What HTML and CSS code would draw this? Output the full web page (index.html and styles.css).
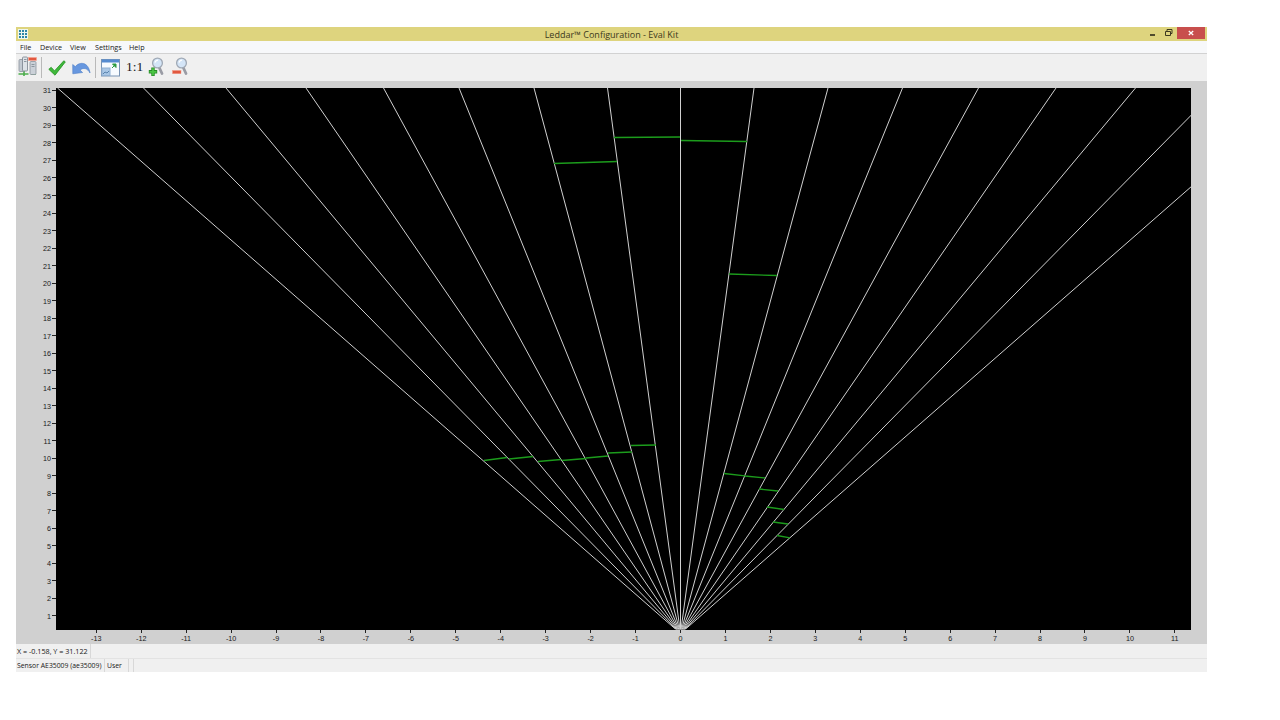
FILE: index.html
```
<!DOCTYPE HTML>
<html>
<head>
	<meta charset="utf-8">
	<title>Leddar™ Configuration - Eval Kit</title>
	<link rel="stylesheet" href="styles.css">
</head>
<body>
	<div class="window">
		<div class="titlebar">
			<svg class="appicon" width="10" height="10" viewBox="0 0 10 10">
				<rect width="10" height="10" fill="#eef6ee"/>
				<path d="M1 2h8M1 5h8M1 8h8" stroke="#2d86a8" stroke-width="2" stroke-dasharray="2 1"/>
			</svg>
			<span class="title">Leddar™ Configuration - Eval Kit</span>
			<div class="winbuttons">
				<svg width="33" height="12" viewBox="0 0 33 12">
					<path d="M4 8h5" stroke="#2c2a18" stroke-width="1.6"/>
					<path d="M19.500 4.500h5v4h-5zM21 4V2.500h5v4h-1.500" fill="none" stroke="#3c391f"/>
				</svg>
				<button class="close"><svg width="6" height="6" viewBox="0 0 6 6"><path d="M.8 1l4.400 4M5.200 1L.8 5" stroke="#fff" stroke-width="1.300"/></svg></button>
			</div>
		</div>
		<div class="menu">
			<span class="mfile">File</span>
			<span class="mdevice">Device</span>
			<span class="mview">View</span>
			<span class="msettings">Settings</span>
			<span>Help</span>
		</div>
		<div class="toolbar">
			<svg class="connect" width="20" height="21" viewBox="0 0 20 21">
				<path d="M.5 18h10M6 15v5M13 18h5" stroke="#4cad4c" stroke-width="1.600"/>
				<rect x="1" y="3.500" width="5" height="12" rx="1" fill="#c3cad2" stroke="#8a939d" stroke-width=".8"/>
				<rect x="4.500" y="1" width="5" height="14" rx="1" fill="#dde2e7" stroke="#78828d" stroke-width=".8"/>
				<path d="M6 3.500h2.500M6 5.500h2.500" stroke="#8c969f"/>
				<rect x="12" y="5.500" width="6" height="13" rx="1" fill="#cbd1d8" stroke="#8a939d" stroke-width=".8"/>
				<path d="M13.500 8.500h3M13.500 10.500h3" stroke="#8c969f"/>
				<rect x="10.500" y="1.500" width="8" height="3" fill="#e2583f" stroke="#f6a493" stroke-width=".6"/>
			</svg>
			<span class="sep"></span>
			<svg class="apply" width="18" height="16" viewBox="0 0 18 16">
				<path d="M.8 9.300L3.200 7.300l3.300 3.600L15.800.8l1.500 1.100L7 15.200z" fill="#3fb83a" stroke="#239022" stroke-width=".8"/>
			</svg>
			<!-- undo arrow -->
			<svg class="undo" width="19" height="13" viewBox="0 0 19 13">
				<path d="M.7 2.500l2.600 2.100C8-.8 16.500 0 18 11 15.500 6.200 11.500 5.300 8 8l2.600 2.500L.8 11.800z" fill="#6797df" stroke="#4f80c8" stroke-width=".6"/>
			</svg>
			<span class="sep"></span>
			<svg class="fit" width="19" height="18" viewBox="0 0 19 18">
				<rect x=".5" y=".5" width="18" height="16.500" fill="#f7fbff" stroke="#7893b3"/>
				<path d="M1 2h17" stroke="#558bd0" stroke-width="3"/>
				<rect x="1" y="9" width="8" height="7.500" fill="#a9c7e6" stroke="#8fb0d2"/>
				<path d="M2 15l2-2 2 1 2-2" fill="none" stroke="#5983ad"/>
				<path d="M11.500 5h3.500v3.500zM14.500 5.500l-3.500 3.500" fill="#2c9b40" stroke="#2c9b40" stroke-width="1"/>
			</svg>
			<span class="ratio">1:1</span>
			<svg class="zoomin" width="17" height="20" viewBox="0 0 17 20">
				<path d="M11 10l3 6.500" stroke="#9a9ca5" stroke-width="2.800" stroke-linecap="round"/>
				<circle cx="9.500" cy="6" r="4.900" fill="#d4e5f7" stroke="#a0a9b5" stroke-width="1.300"/>
				<path d="M7 5.500q.7-2.300 3-2.300" fill="none" stroke="#fff" stroke-width="1.300"/>
				<path d="M5 10.500v8.500M.8 14.800h8.400" stroke="#268c26" stroke-width="3.400"/>
				<path d="M5 11.300v6.900M1.600 14.800h6.800" stroke="#4bc544" stroke-width="1.800"/>
			</svg>
			<svg class="zoomout" width="17" height="20" viewBox="0 0 17 20">
				<path d="M11 10l3 6.500" stroke="#9a9ca5" stroke-width="2.800" stroke-linecap="round"/>
				<circle cx="9.500" cy="6" r="4.900" fill="#d4e5f7" stroke="#a0a9b5" stroke-width="1.300"/>
				<path d="M7 5.500q.7-2.300 3-2.300" fill="none" stroke="#fff" stroke-width="1.300"/>
				<rect x=".5" y="13.500" width="8.500" height="3.200" fill="#e2583f" stroke="#f09a88" stroke-width=".5"/>
			</svg>
		</div>
		<svg id="chart" class="chart" width="1191" height="563" viewBox="16 81 1191 563">
			<defs><clipPath id="plot"><rect x="56" y="88" width="1135" height="541.500"/></clipPath></defs>
			<rect x="56" y="88" width="1135" height="542"/>
			<g id="beams" class="beams" clip-path="url(#plot)"></g>
			<path class="echoes" d="M484 460.500L507 457.500M509 459L533 456.500M538 461.500L561 459.500M562 460.500L586 458.500M586 458L608 456M608 453L632 452M631 445.500L656 445M554 163.500L617 161.500M614 137.500L680 137M681 140.500L747 141.500M729 274L777 275.500M724 473.500L745 475.800M745 476L765 478M759 489L778 491M767 507L784 509.500M773 522L788 524M777 535.500L790 537.800"/>
			<g id="axes" class="axes"></g>
		</svg>
		<div class="status"><span class="coords">X = -0.158, Y = 31.122</span></div>
		<div class="status bottom">
			<span class="sensor">Sensor AE35009 (ae35009)</span>
			<span class="user">User</span>
			<span class="blank"></span>
		</div>
	</div>
	<script>
const svgns = "http://www.w3.org/2000/svg";
// sensor position and pixels per meter
const x0 = 680.5, y0 = 633.5, sx = 44.94, sy = 17.52;
function AddShape(parent, name, attrs, text) {
	const el = document.createElementNS(svgns, name);
	for (const key in attrs) el.setAttribute(key, attrs[key]);
	if (text !== undefined) el.textContent = text;
	document.getElementById(parent).appendChild(el);
}
// where each segment border crosses the top of the plot
const beams = [57.5, 143.5, 226, 306, 383.5, 459, 534, 607.5, 680.5, 754, 828, 902.5, 978.5, 1056, 1135.5, 1218, 1304];
beams.forEach((x) => AddShape("beams", "line", {x1: x0, y1: y0, x2: x, y2: 88}));
for (var i = 1; i <= 31; i++) {
	const y = y0 - i * sy;
	AddShape("axes", "path", {d: `M52 ${Math.floor(y) + .5}h4`});
	AddShape("axes", "text", {x: 51, y: y + 3, "text-anchor": "end"}, i);
}
for (var i = -13; i <= 11; i++) {
	const x = x0 + i * sx;
	AddShape("axes", "path", {d: `M${Math.floor(x) + .5} 630v3`});
	AddShape("axes", "text", {x: x, y: 640.5, "text-anchor": "middle"}, i);
}
	</script>
</body>
</html>
```
FILE: styles.css
```
* {
	box-sizing: border-box;
}
body {
	margin: 0;
	background-color: white;
	font-family: "Open Sans", sans-serif;
}
.window {
	width: 1191px;
	margin: 27px 0 0 16px;
	color: #181818;
}
svg {
	display: block;
	flex: none;
}
/* title bar */
.titlebar {
	display: grid;
	grid-template-columns: 100px 1fr 100px;
	height: 14px;
	background-color: #ded47e;
}
.appicon {
	margin: 2px 0 0 2px;
}
.title {
	font-size: 9px;
	line-height: 15px;
	text-align: center;
	color: #3c391b;
}
.winbuttons {
	display: flex;
	justify-content: flex-end;
}
.close {
	width: 28px;
	height: 12px;
	margin-right: 2px;
	margin-left: -2px;
	padding: 0;
	border: 0;
	background-color: #c84f4d;
	display: flex;
	align-items: center;
	justify-content: center;
}
/* menu */
.menu {
	display: flex;
	height: 13px;
	padding-left: 4px;
	font-size: 7.200px;
	line-height: 13px;
	background-color: #f7f8fa;
	border-bottom: 1px solid #d2d2d2;
}
.mfile { width: 20px; }
.mdevice { width: 30px; }
.mview { width: 25px; }
.msettings { width: 34px; }
/* toolbar */
.toolbar {
	display: flex;
	align-items: flex-start;
	height: 27px;
	background-color: #f0f0f0;
}
.sep {
	width: 1px;
	height: 21px;
	margin-top: 3px;
	background-color: #b9b9b9;
}
.connect { margin: 2px 3px 0 2px; }
.apply { margin: 6px 6px 0 6px; }
.undo { margin: 8px 4px 0 0; }
.fit { margin: 5px 6px 0 5px; }
.ratio {
	width: 20px;
	margin-right: 2px;
	font-family: "Liberation Serif", serif;
	font-size: 13.500px;
	line-height: 25px;
}
.zoomin { margin: 3px 7px 0 0; }
.zoomout { margin-top: 3px; }
/* chart */
.chart {
	background-color: #d0d0d0;
}
.beams {
	stroke: #d0d0d0;
	stroke-width: 1;
}
.echoes {
	fill: none;
	stroke: #1c9c1c;
	stroke-width: 1.300;
}
.axes {
	stroke: #222;
}
.axes text {
	stroke: none;
	fill: #181818;
	font-family: "Liberation Sans", sans-serif;
	font-size: 7.200px;
}
/* status bars */
.status {
	display: flex;
	height: 14px;
	font-size: 7.200px;
	line-height: 15px;
	white-space: nowrap;
	background-color: #f0f0f0;
}
.status span {
	padding-left: 1px;
	border-right: 1px solid #d8d8d8;
}
.coords { width: 75px; }
.bottom {
	font-size: 6.850px;
	line-height: 14px;
	border-top: 1px solid #e3e3e3;
}
.sensor { width: 89px; }
.status .user {
	width: 24px;
	padding-left: 2px;
}
.status .blank {
	width: 5px;
}
```
